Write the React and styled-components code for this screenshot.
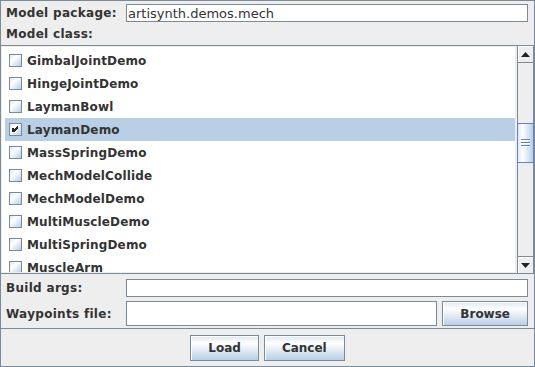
import React from "react";
import styled, { createGlobalStyle } from "styled-components";

const GlobalStyle = createGlobalStyle`
  html, body {
    margin: 0;
    padding: 0;
    background: #eeeeee;
  }
  body {
    font-family: "DejaVu Sans", Verdana, sans-serif;
    color: #333333;
  }
  * {
    box-sizing: border-box;
  }
`;

const models = [
    "GimbalJointDemo",
    "HingeJointDemo",
    "LaymanBowl",
    "LaymanDemo",
    "MassSpringDemo",
    "MechModelCollide",
    "MechModelDemo",
    "MultiMuscleDemo",
    "MultiSpringDemo",
    "MuscleArm",
];

function CheckBox({ checked }) {
    return (
        <Box>
            {checked && (
                <svg width="11" height="11" viewBox="0 0 11 11" shapeRendering="crispEdges">
                    <rect x="2" y="4" width="2" height="4" fill="#222" />
                    <path d="M4 7 L8 3 M4 8 L8 4 M4 6 L8 2" stroke="#222" strokeWidth="1" fill="none" shapeRendering="auto" />
                </svg>
            )}
        </Box>
    );
}

function Arrow({ down }) {
    return (
        <svg width="9" height="5" viewBox="0 0 9 5">
            {down ? <polygon points="0,0 9,0 4.5,5" fill="#222" /> : <polygon points="0,5 9,5 4.5,0" fill="#222" />}
        </svg>
    );
}

function App() {
    const selected = "LaymanDemo";

    return (
        <>
            <GlobalStyle />
            <Window>
                <TopPanel>
                    <Label>Model package:</Label>
                    <TextField>artisynth.demos.mech</TextField>
                    <Label>Model class:</Label>
                </TopPanel>

                <ScrollPane>
                    <ListView>
                        {models.map((name) => (
                            <Row key={name} $selected={name === selected}>
                                <CheckBox checked={name === selected} />
                                <span>{name}</span>
                            </Row>
                        ))}
                    </ListView>
                    <ScrollBar>
                        <ArrowButton $down={false}>
                            <Arrow />
                        </ArrowButton>
                        <Track>
                            <Thumb $offset={60} $size={40}>
                                <Grip />
                                <Grip />
                                <Grip />
                            </Thumb>
                        </Track>
                        <ArrowButton $down>
                            <Arrow down />
                        </ArrowButton>
                    </ScrollBar>
                </ScrollPane>

                <Form>
                    <Label>Build args:</Label>
                    <TextField />
                    <Label>Waypoints file:</Label>
                    <FileRow>
                        <TextField />
                        <Button>Browse</Button>
                    </FileRow>
                </Form>

                <ButtonBar>
                    <Button>Load</Button>
                    <Button>Cancel</Button>
                </ButtonBar>
            </Window>
        </>
    );
}

export default App;

const Window = styled.div`
    width: 535px;
    height: 367px;
    border: 1px solid #7a8a99;
    background: #eeeeee;
    display: flex;
    flex-direction: column;
    overflow: hidden;
`;

const TopPanel = styled.div`
    display: grid;
    grid-template-columns: 120px 1fr;
    grid-template-rows: 18px 23px;
    padding: 3px 6px 0 5px;
    height: 44px;
    flex-shrink: 0;
`;

const Label = styled.div`
    display: flex;
    align-items: center;
    font-size: 12px;
    font-weight: bold;
    letter-spacing: 0.3px;
    color: #333333;
    white-space: nowrap;
`;

const TextField = styled.div`
    display: flex;
    align-items: center;
    flex: 1;
    min-width: 0;
    background: #ffffff;
    border: 1px solid #7a8a99;
    padding: 0 2px 0 1px;
    font-size: 13px;
    color: #333333;
    white-space: nowrap;
    overflow: hidden;
`;

const ScrollPane = styled.div`
    display: flex;
    height: 229px;
    margin: 0 -1px;
    border: 1px solid #7a8a99;
    flex-shrink: 0;
`;

const ListView = styled.div`
    flex: 1;
    margin: 1px 2px 1px 1px;
    padding: 2px 0 0 3px;
    background: #ffffff;
    overflow: hidden;
`;

const Row = styled.div`
    display: flex;
    align-items: center;
    gap: 5px;
    height: 23px;
    padding-left: 4px;
    flex-shrink: 0;
    font-size: 12px;
    font-weight: bold;
    letter-spacing: 0.15px;
    color: #333333;
    background: ${(p) => (p.$selected ? "#b8cfe5" : "transparent")};
`;

const Box = styled.div`
    width: 13px;
    height: 13px;
    flex-shrink: 0;
    display: flex;
    align-items: center;
    justify-content: center;
    border: 1px solid #7a8a99;
    background: linear-gradient(to bottom right, #dde8f3 0%, #ffffff 35%, #b8cfe5 100%);
`;

const ScrollBar = styled.div`
    width: 17px;
    display: flex;
    flex-direction: column;
    border-left: 1px solid #7a8a99;
    border-right: 1px solid #7a8a99;
    background: #eeeeee;
`;

const ArrowButton = styled.div`
    height: 17px;
    flex-shrink: 0;
    display: flex;
    align-items: center;
    justify-content: center;
    background: #eeeeee;
    box-shadow: inset 1px 1px 0 #ffffff;
    ${(p) => (p.$down ? "border-top: 1px solid #7a8a99;" : "border-bottom: 1px solid #7a8a99;")}
`;

const Track = styled.div`
    flex: 1;
    display: flex;
    flex-direction: column;
    background: #eeeeee;
`;

const Thumb = styled.div`
    margin: ${(p) => p.$offset}px -1px 0;
    height: ${(p) => p.$size}px;
    border: 1px solid #6382bf;
    background: linear-gradient(to right, #dde8f3 0%, #ffffff 30%, #b8cfe5 100%);
    display: flex;
    flex-direction: column;
    align-items: center;
    justify-content: center;
    gap: 1px;
`;

const Grip = styled.div`
    width: 9px;
    height: 1px;
    background: #6382bf;
    box-shadow: 0 1px 0 #ffffff;
    margin-bottom: 1px;
`;

const Form = styled.div`
    display: grid;
    grid-template-columns: 120px 1fr;
    grid-template-rows: 18px 25px;
    row-gap: 4px;
    padding: 5px 6px 2px 5px;
    height: 54px;
    flex-shrink: 0;
`;

const FileRow = styled.div`
    display: flex;
    gap: 5px;
`;

const Button = styled.button`
    height: 100%;
    padding: 0 17px;
    border: 1px solid #7a8a99;
    background: linear-gradient(to bottom, #dde8f3 0%, #ffffff 30%, #b8cfe5 100%);
    box-shadow: inset 1px 1px 0 #ffffff;
    font-family: "DejaVu Sans", Verdana, sans-serif;
    font-size: 12px;
    font-weight: bold;
    color: #333333;
    flex-shrink: 0;
`;

const ButtonBar = styled.div`
    display: flex;
    justify-content: center;
    gap: 5px;
    flex: 1;
    padding: 6px 0 5px;
    border-top: 1px solid #7a8a99;
`;
